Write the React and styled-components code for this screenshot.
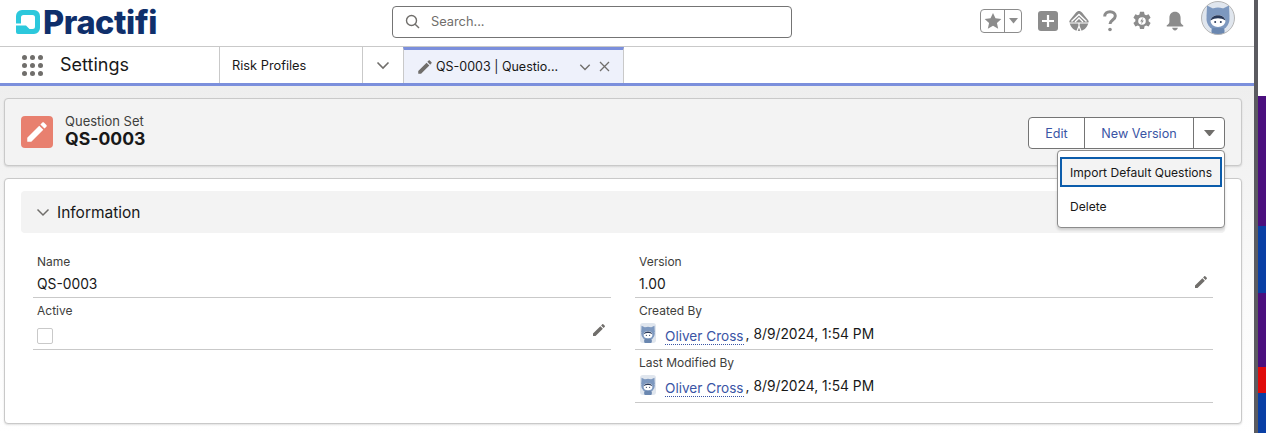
import React from 'react';
import styled, { createGlobalStyle } from 'styled-components';

const GlobalStyle = createGlobalStyle`
  html, body {
    margin: 0;
    height: 100%;
    overflow: hidden;
    background: #fff;
  }
  body {
    font-family: Inter, "Liberation Sans", sans-serif;
    color: #181818;
  }
`;

const Screen = styled.div`
  display: flex;
  width: 1266px;
  height: 433px;
  overflow: hidden;
`;

const AppFrame = styled.div`
  width: 1254px;
  height: 433px;
  display: flex;
  flex-direction: column;
  flex: none;
`;

const Divider = styled.div`
  width: 4px;
  flex: none;
  background: #5b5b60;
`;

const Wallpaper = styled.div`
  flex: 1;
  display: flex;
  flex-direction: column;
`;

const Stripe = styled.div`
  height: ${(props) => props.h}px;
  flex: none;
  background: ${(props) => props.color};
`;

const Header = styled.header`
  height: 46px;
  flex: none;
  display: flex;
  align-items: center;
  border-bottom: 1px solid #c9c9c9;
  background: #fff;
`;

const LogoWrap = styled.div`
  width: 392px;
  flex: none;
  display: flex;
  align-items: center;
  gap: 3px;
  padding-left: 16px;
  box-sizing: border-box;
`;

const LogoText = styled.span`
  font-size: 32.5px;
  font-weight: 800;
  letter-spacing: -0.4px;
  line-height: 32px;
  color: #0f2f6b;
`;

const SearchBox = styled.div`
  width: 400px;
  height: 32px;
  flex: none;
  margin-top: -3px;
  box-sizing: border-box;
  border: 1px solid #747474;
  border-radius: 4px;
  display: flex;
  align-items: center;
  gap: 11px;
  padding-left: 12px;
  font-size: 12.8px;
  color: #706e6b;
`;

const Tools = styled.div`
  flex: 1;
  display: flex;
  align-items: center;
  padding-left: 188px;
  margin-top: -4px;
`;

const FavGroup = styled.div`
  width: 42px;
  height: 24px;
  box-sizing: border-box;
  border: 1px solid #8c8c8c;
  border-radius: 4px;
  display: flex;
  margin-right: 16px;
`;

const FavPart = styled.div`
  width: ${(props) => props.w}px;
  display: flex;
  align-items: center;
  justify-content: center;
  border-left: ${(props) => (props.split ? '1px solid #8c8c8c' : 'none')};
`;

const ToolIcon = styled.div`
  display: flex;
  align-items: center;
  justify-content: center;
  width: ${(props) => props.w}px;
  margin-right: ${(props) => props.gap}px;
`;

const AvatarSlot = styled.div`
  margin-top: -6px;
`;

const NavBar = styled.nav`
  height: 36px;
  flex: none;
  display: flex;
  border-bottom: 3px solid #7b8fdc;
  background: #fff;
  box-sizing: content-box;
`;

const AppLauncher = styled.div`
  width: 219px;
  flex: none;
  display: flex;
  align-items: center;
  gap: 17px;
  padding-left: 22px;
  box-sizing: border-box;
`;

const Waffle = styled.div`
  display: grid;
  grid-template-columns: repeat(3, 5px);
  gap: 3px;
`;

const WaffleDot = styled.span`
  width: 5px;
  height: 5px;
  border-radius: 50%;
  background: #706e6b;
`;

const AppName = styled.span`
  font-size: 18px;
  line-height: 22px;
`;

const NavTab = styled.div`
  width: 143px;
  flex: none;
  box-sizing: border-box;
  border-left: 1px solid #c9c9c9;
  padding-left: 12px;
  display: flex;
  align-items: center;
  font-size: 12.8px;
`;

const NavCaret = styled.div`
  width: 41px;
  flex: none;
  box-sizing: border-box;
  border-left: 1px solid #c9c9c9;
  display: flex;
  align-items: center;
  justify-content: center;
`;

const ActiveTab = styled.div`
  width: 221px;
  flex: none;
  box-sizing: border-box;
  border-left: 1px solid #c9c9c9;
  border-right: 1px solid #c9c9c9;
  border-top: 3px solid #7b8fdc;
  background: #eef1fb;
  display: flex;
  align-items: center;
  padding-left: 12px;
  font-size: 12.5px;
`;

const TabTitle = styled.span`
  margin-left: 2px;
  width: 143px;
  white-space: nowrap;
`;

const TabAction = styled.span`
  display: flex;
  margin-right: ${(props) => props.gap}px;
`;

const Page = styled.main`
  flex: 1;
  padding: 12px 12px 0 4px;
  display: flex;
  flex-direction: column;
  gap: 12px;
  background: linear-gradient(#eeeeee, #fafafa 60%, #ffffff);
`;

const Highlights = styled.section`
  height: 68px;
  flex: none;
  box-sizing: border-box;
  background: #f3f3f3;
  border: 1px solid #c9c9c9;
  border-radius: 4px;
  box-shadow: 0 1px 2px rgba(0, 0, 0, 0.12);
  display: flex;
  align-items: center;
  padding: 0 16px;
  position: relative;
`;

const ObjectIcon = styled.div`
  width: 32px;
  height: 32px;
  border-radius: 4px;
  background: #e8806f;
  display: flex;
  align-items: center;
  justify-content: center;
  margin-right: 12px;
`;

const TitleBlock = styled.div`
  flex: 1;
  margin-top: -1px;
`;

const ObjectType = styled.div`
  font-size: 13px;
  line-height: 15px;
  color: #3e3e3c;
`;

const RecordName = styled.div`
  font-size: 17.6px;
  font-weight: 700;
  line-height: 20px;
`;

const ButtonGroup = styled.div`
  display: flex;
  height: 32px;
  box-sizing: border-box;
  border: 1px solid #747474;
  border-radius: 4px;
  background: #fff;
  margin-top: 1px;
`;

const ActionButton = styled.button`
  width: ${(props) => props.w}px;
  padding: 1px 0 0;
  border: none;
  border-left: ${(props) => (props.first ? 'none' : '1px solid #747474')};
  background: transparent;
  font: inherit;
  font-size: 12.6px;
  color: #3a55a5;
  display: flex;
  align-items: center;
  justify-content: center;
`;

const Menu = styled.div`
  position: absolute;
  top: 51px;
  right: 16px;
  width: 168px;
  height: 78px;
  box-sizing: border-box;
  z-index: 2;
  background: #fff;
  border: 1px solid #8c8c8c;
  border-radius: 4px;
  box-shadow: 0 2px 3px rgba(0, 0, 0, 0.16);
  padding: 6px 2px;
  font-size: 12.05px;
`;

const MenuItem = styled.div`
  height: 30px;
  box-sizing: border-box;
  display: flex;
  align-items: center;
  padding-left: ${(props) => (props.focused ? '8px' : '10px')};
  margin-bottom: 4px;
  color: #181818;
  background: ${(props) => (props.focused ? '#f3f3f3' : 'transparent')};
  border: ${(props) => (props.focused ? '2px solid #0b5cab' : 'none')};
`;

const RecordCard = styled.section`
  height: 246px;
  flex: none;
  box-sizing: border-box;
  background: #fff;
  border: 1px solid #c9c9c9;
  border-radius: 4px;
  box-shadow: 0 1px 2px rgba(0, 0, 0, 0.12);
  padding: 12px 16px;
`;

const SectionHeader = styled.div`
  height: 42px;
  background: #f3f3f3;
  border-radius: 4px;
  display: flex;
  align-items: center;
  gap: 7px;
  padding-left: 15px;
  font-size: 15.5px;
`;

const FieldGrid = styled.div`
  display: grid;
  grid-template-columns: 578px 578px;
  column-gap: 24px;
  padding: 20px 12px 0;
`;

const Column = styled.div`
  display: flex;
  flex-direction: column;
`;

const Field = styled.div`
  height: ${(props) => props.h}px;
  box-sizing: border-box;
  border-bottom: 1px solid #c9c9c9;
  padding: 0 4px;
  position: relative;
`;

const FieldLabel = styled.div`
  font-size: 12px;
  line-height: 18px;
  color: #3e3e3c;
  padding-top: ${(props) => props.top || 0}px;
`;

const FieldValue = styled.div`
  font-size: 13.8px;
  line-height: 20px;
  margin-top: ${(props) => props.top || 3}px;
  display: flex;
  align-items: center;
`;

const EditSlot = styled.span`
  position: absolute;
  right: 4px;
  top: ${(props) => props.top}px;
  display: flex;
`;

const Checkbox = styled.span`
  width: 16px;
  height: 16px;
  box-sizing: border-box;
  border: 1px solid #c9c9c9;
  border-radius: 2px;
  background: #fff;
`;

const UserLink = styled.a`
  color: #3a55a5;
  margin-left: 9px;
  border-bottom: 1px dotted #3a55a5;
  line-height: 16px;
  font-size: 13.6px;
  position: relative;
  top: 2px;
`;

const MetaText = styled.span`
  white-space: pre;
  margin-left: 2px;
`;

const PENCIL = 'M3 17.25V21h3.75L17.81 9.94l-3.75-3.75L3 17.25zM20.71 7.04c.39-.39.39-1.02 0-1.41l-2.34-2.34c-.39-.39-1.02-.39-1.41 0l-1.83 1.83 3.75 3.75 1.83-1.83z';

const Pencil = ({ size = 16, color = '#706e6b' }) => (
  <svg width={size} height={size} viewBox="0 0 24 24" fill={color}>
    <path d={PENCIL} />
  </svg>
);

const Chevron = ({ size = 14, color = '#706e6b', width = 1.6 }) => (
  <svg width={size} height={size} viewBox="0 0 14 14" fill="none" stroke={color} strokeWidth={width}>
    <path d="M1.5 4.5 7 10l5.5-5.5" />
  </svg>
);

const Close = () => (
  <svg width="11" height="11" viewBox="0 0 11 11" fill="none" stroke="#706e6b" strokeWidth="1.3">
    <path d="M1 1l9 9M10 1l-9 9" />
  </svg>
);

const LogoMark = () => (
  <svg width="24" height="24" viewBox="0 0 24 24" style={{ marginTop: -2 }}>
    <path
      fill="#2cc8dc"
      d="M6 0H18A6 6 0 0 1 24 6V18A6 6 0 0 1 18 24H2A2 2 0 0 1 0 22V15.500H10L13.500 19H16.500A2.500 2.500 0 0 0 19 16.500V7.500A2.500 2.500 0 0 0 16.500 5H7.500A2.500 2.500 0 0 0 5 7.500V13.500H0V6A6 6 0 0 1 6 0Z"
    />
  </svg>
);

const SearchIcon = () => (
  <svg width="15" height="15" viewBox="0 0 15 15" fill="none" stroke="#706e6b" strokeWidth="1.4">
    <circle cx="6.5" cy="6.500" r="5" />
    <path d="M10.200 10.200 14 14" />
  </svg>
);

const StarIcon = () => (
  <svg width="18" height="18" viewBox="0 0 16 16" fill="#8c8c8c">
    <path d="M8 .8l2.200 4.800 5.200.6-3.900 3.500 1.100 5.200L8 12.300l-4.600 2.600 1.100-5.200L.6 6.200l5.200-.6z" />
  </svg>
);

const CaretDown = ({ w = 10, color = '#8c8c8c' }) => (
  <svg width={w} height={w * 0.6} viewBox="0 0 10 6" fill={color}>
    <path d="M0 0h10L5 6z" />
  </svg>
);

const PlusIcon = () => (
  <svg width="20" height="20" viewBox="0 0 20 20">
    <rect width="20" height="20" rx="3" fill="#8c8c8c" />
    <path d="M10 4v12M4 10h12" stroke="#fff" strokeWidth="2.200" />
  </svg>
);

const TrailIcon = () => (
  <svg width="22" height="22" viewBox="0 0 22 22">
    <path
      fill="#8c8c8c"
      d="M11 1c1.200 0 2.200.6 3 1.600l6 7.400c1 1.300.8 2 .2 3.500C19 18 15.500 21 11 21S3 18 1.800 13.500C1.200 12 1 11.300 2 10l6-7.400C8.800 1.600 9.800 1 11 1z"
    />
    <path d="M3.500 11.500 11 4.500l7.500 7" fill="none" stroke="#fff" strokeWidth="1.500" />
    <path d="M7 12l4-4 4 4" fill="none" stroke="#fff" strokeWidth="1.300" />
    <path d="M1 13h20M11 13v3M9 21l2-5 2 5" fill="none" stroke="#fff" strokeWidth="1.200" />
  </svg>
);

const HelpIcon = () => (
  <svg width="14" height="22" viewBox="0 0 14 22" fill="none" stroke="#8c8c8c" strokeWidth="3">
    <path d="M1.700 6.500C1.700 3.500 4 1.700 7 1.700s5.300 1.800 5.300 4.300c0 4-5.300 4-5.300 8" />
    <circle cx="7" cy="19.500" r="1.800" fill="#8c8c8c" stroke="none" />
  </svg>
);

const GearIcon = () => (
  <svg width="20" height="20" viewBox="0 0 20 20">
    <path
      fill="#8c8c8c"
      d="M8 .8h4l.6 2.600 1.500.8 2.500-.9 2 3.400-2 1.800v1.700l2 1.800-2 3.400-2.500-.9-1.500.8-.6 2.600H8l-.6-2.600-1.500-.8-2.500.9-2-3.400 2-1.800V8.500l-2-1.800 2-3.400 2.500.9 1.500-.8z"
    />
    <circle cx="10" cy="10" r="3.800" fill="#fff" />
    <path d="M10.800 6.800 8.200 10.500h1.600l-.6 2.700 2.600-3.700h-1.600z" fill="#8c8c8c" />
  </svg>
);

const BellIcon = () => (
  <svg width="20" height="21" viewBox="0 0 20 21" fill="#8c8c8c">
    <path d="M10 .8c3.500 0 5.600 2.600 5.600 6v4c0 1.500 1 2.500 2.400 3.400.6.400.4 1.300-.4 1.300H2.400c-.8 0-1-.9-.4-1.300 1.400-.9 2.400-1.900 2.400-3.400v-4c0-3.400 2.100-6 5.600-6z" />
    <path d="M7.200 16.800h5.600c-.2 1.500-1.300 2.600-2.800 2.600s-2.600-1.100-2.800-2.600z" />
  </svg>
);

// the little hooded mascot used for user photos
const Mascot = () => (
  <>
    <rect width="34" height="34" fill="#e0e6ee" />
    <path d="M6 4.500l8 4h6l8-4 .5 11H5.500z" fill="#7d98bf" />
    <circle cx="17" cy="18" r="11.500" fill="#7d98bf" />
    <rect x="10.500" y="27" width="13" height="7" rx="2" fill="#6a87b0" />
    <ellipse cx="17" cy="20" rx="7.500" ry="6" fill="#fff" />
    <path d="M9.500 19.500c.8-3.500 4-5.200 7.500-5.200s6.700 1.700 7.500 5.200c-2.500-1.600-4.800-2.300-7.500-2.300s-5 .7-7.500 2.300z" fill="#2a3a5a" />
    <circle cx="14.200" cy="21" r="1" fill="#2a3a5a" />
    <circle cx="19.800" cy="21" r="1" fill="#2a3a5a" />
  </>
);

const HeaderAvatar = () => (
  <svg width="34" height="34" viewBox="0 0 34 34" style={{ display: 'block' }}>
    <clipPath id="head-clip"><circle cx="17" cy="17" r="16.500" /></clipPath>
    <g clipPath="url(#head-clip)"><Mascot /></g>
    <circle cx="17" cy="17" r="16.500" fill="none" stroke="#b5b5b5" />
  </svg>
);

const UserThumb = () => (
  <svg width="16" height="20" viewBox="2 0 30 34" preserveAspectRatio="xMidYMid slice" style={{ borderRadius: 3, marginLeft: 1, marginTop: -2 }}>
    <Mascot />
  </svg>
);

const App = () => {
  const stripes = [
    { h: 96, color: '#ffffff' },
    { h: 130, color: '#4b0f7e' },
    { h: 67, color: '#0a3fa5' },
    { h: 74, color: '#4b0f7e' },
    { h: 26, color: '#e00b0b' },
    { h: 40, color: '#0a3fa5' },
  ];

  return (
    <Screen>
      <GlobalStyle />
      <AppFrame>
        <Header>
          <LogoWrap>
            <LogoMark />
            <LogoText>Practifi</LogoText>
          </LogoWrap>
          <SearchBox>
            <SearchIcon />
            Search...
          </SearchBox>
          <Tools>
            <FavGroup>
              <FavPart w={24}><StarIcon /></FavPart>
              <FavPart w={16} split><CaretDown w={9} /></FavPart>
            </FavGroup>
            <ToolIcon w={20} gap={10}><PlusIcon /></ToolIcon>
            <ToolIcon w={22} gap={13}><TrailIcon /></ToolIcon>
            <ToolIcon w={14} gap={15}><HelpIcon /></ToolIcon>
            <ToolIcon w={20} gap={13}><GearIcon /></ToolIcon>
            <ToolIcon w={20} gap={16}><BellIcon /></ToolIcon>
            <AvatarSlot><HeaderAvatar /></AvatarSlot>
          </Tools>
        </Header>
        <NavBar>
          <AppLauncher>
            <Waffle>
              {Array.from({ length: 9 }, (_, i) => <WaffleDot key={i} />)}
            </Waffle>
            <AppName>Settings</AppName>
          </AppLauncher>
          <NavTab>Risk Profiles</NavTab>
          <NavCaret><Chevron /></NavCaret>
          <ActiveTab>
            <Pencil size={18} />
            <TabTitle>QS-0003 | Questio...</TabTitle>
            <TabAction gap={8}><Chevron size={12} /></TabAction>
            <TabAction gap={6}><Close /></TabAction>
          </ActiveTab>
        </NavBar>
        <Page>
          <Highlights>
            <ObjectIcon><Pencil size={26} color="#fff" /></ObjectIcon>
            <TitleBlock>
              <ObjectType>Question Set</ObjectType>
              <RecordName>QS-0003</RecordName>
            </TitleBlock>
            <ButtonGroup>
              <ActionButton first w={55}>Edit</ActionButton>
              <ActionButton w={109}>New Version</ActionButton>
              <ActionButton w={31}><CaretDown w={11} color="#706e6b" /></ActionButton>
            </ButtonGroup>
            <Menu>
              <MenuItem focused>Import Default Questions</MenuItem>
              <MenuItem>Delete</MenuItem>
            </Menu>
          </Highlights>
          <RecordCard>
            <SectionHeader>
              <Chevron size={14} width={1.5} />
              Information
            </SectionHeader>
            <FieldGrid>
              <Column>
                <Field h={45}>
                  <FieldLabel>Name</FieldLabel>
                  <FieldValue>QS-0003</FieldValue>
                </Field>
                <Field h={52}>
                  <FieldLabel top={4}>Active</FieldLabel>
                  <FieldValue top={8}><Checkbox /></FieldValue>
                  <EditSlot top={24}><Pencil size={16} /></EditSlot>
                </Field>
              </Column>
              <Column>
                <Field h={45}>
                  <FieldLabel>Version</FieldLabel>
                  <FieldValue>1.00</FieldValue>
                  <EditSlot top={21}><Pencil size={16} /></EditSlot>
                </Field>
                <Field h={52}>
                  <FieldLabel top={4}>Created By</FieldLabel>
                  <FieldValue top={4}>
                    <UserThumb />
                    <UserLink>Oliver Cross</UserLink>
                    <MetaText>, 8/9/2024, 1:54 PM</MetaText>
                  </FieldValue>
                </Field>
                <Field h={53}>
                  <FieldLabel top={4}>Last Modified By</FieldLabel>
                  <FieldValue top={4}>
                    <UserThumb />
                    <UserLink>Oliver Cross</UserLink>
                    <MetaText>, 8/9/2024, 1:54 PM</MetaText>
                  </FieldValue>
                </Field>
              </Column>
            </FieldGrid>
          </RecordCard>
        </Page>
      </AppFrame>
      <Divider />
      <Wallpaper>
        {stripes.map((s, i) => <Stripe key={i} h={s.h} color={s.color} />)}
      </Wallpaper>
    </Screen>
  );
};

export default App;
